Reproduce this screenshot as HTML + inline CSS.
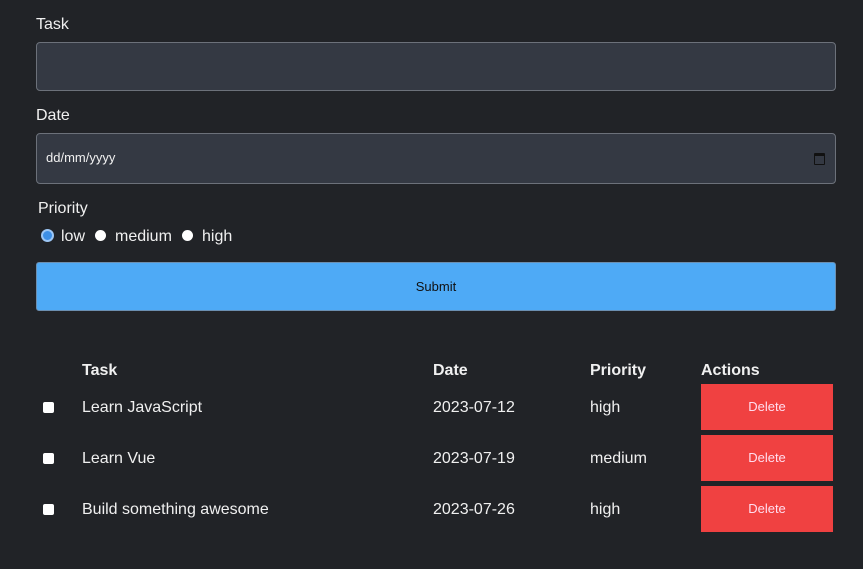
<!DOCTYPE html>
<html><head><style>
body{margin:0;background:#212327;font-family:"Liberation Sans",sans-serif;color:#f0f0f0;width:863px;height:569px;overflow:hidden;position:relative}
.a{position:absolute}
.lbl{font-size:16px}
.inp{left:36px;width:798px;background:#343943;border:1px solid #6c717a;border-radius:4px}
.rad{width:11px;height:11px;border-radius:50%;background:#fff;top:230px}
.cb{width:11px;height:11px;background:#fff;border-radius:2px;left:43px}
.del{left:701px;width:132px;height:46px;background:#f04141;color:#fde;font-size:13px;line-height:46px;text-align:center}
.t{font-size:16px}
.h{font-weight:bold;font-size:16px;top:362px}
</style></head><body>
<div class="a lbl" style="left:36px;top:16px">Task</div>
<div class="a inp" style="top:42px;height:47px"></div>
<div class="a lbl" style="left:36px;top:107px">Date</div>
<div class="a inp" style="top:133px;height:49px"></div>
<div class="a" style="left:46px;top:150px;font-size:13px">dd/mm/yyyy</div>
<div class="a" style="left:814px;top:153px;width:9px;height:8px;border:1.5px solid #111;border-top-width:3px;border-radius:1px"></div>
<div class="a lbl" style="left:38px;top:200px">Priority</div>
<div class="a" style="left:41px;top:229px;width:9px;height:9px;border-radius:50%;background:#3d8fe6;border:2px solid #9cc6f5"></div>
<div class="a lbl" style="left:61px;top:228px">low</div>
<div class="a rad" style="left:95px"></div>
<div class="a lbl" style="left:115px;top:228px">medium</div>
<div class="a rad" style="left:182px"></div>
<div class="a lbl" style="left:202px;top:228px">high</div>
<div class="a" style="left:36px;top:262px;width:798px;height:47px;background:#4eaaf6;border:1px solid #6c8fb0;border-radius:3px;color:#111;font-size:13px;line-height:47px;text-align:center">Submit</div>
<div class="a h" style="left:82px">Task</div>
<div class="a h" style="left:433px">Date</div>
<div class="a h" style="left:590px">Priority</div>
<div class="a h" style="left:701px">Actions</div>

<div class="a cb" style="top:402px"></div>
<div class="a t" style="left:82px;top:399px">Learn JavaScript</div>
<div class="a t" style="left:433px;top:399px">2023-07-12</div>
<div class="a t" style="left:590px;top:399px">high</div>
<div class="a del" style="top:384px">Delete</div>

<div class="a cb" style="top:453px"></div>
<div class="a t" style="left:82px;top:450px">Learn Vue</div>
<div class="a t" style="left:433px;top:450px">2023-07-19</div>
<div class="a t" style="left:590px;top:450px">medium</div>
<div class="a del" style="top:435px">Delete</div>

<div class="a cb" style="top:504px"></div>
<div class="a t" style="left:82px;top:501px">Build something awesome</div>
<div class="a t" style="left:433px;top:501px">2023-07-26</div>
<div class="a t" style="left:590px;top:501px">high</div>
<div class="a del" style="top:486px">Delete</div>
</body></html>
